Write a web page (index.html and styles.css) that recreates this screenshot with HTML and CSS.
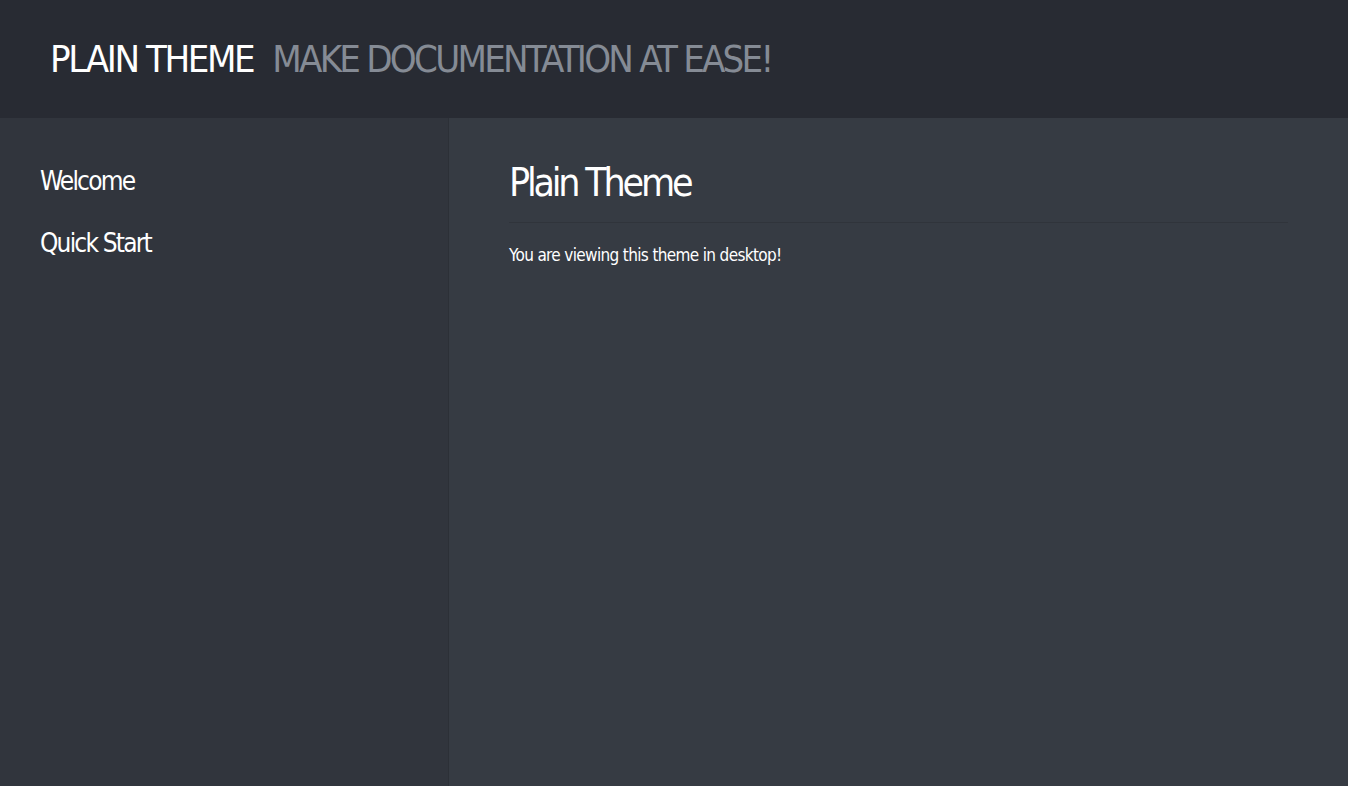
FILE: index.html
```html
<!DOCTYPE html>
<html>
<head>
<meta charset="utf-8">
<link rel="stylesheet" href="styles.css">
</head>
<body>
<header class="topbar">
  <span class="brand">PLAIN THEME</span>
  <span class="tagline">MAKE DOCUMENTATION AT EASE!</span>
</header>
<div class="layout">
  <nav class="sidebar">
    <a class="navlink" href="#">Welcome</a>
    <a class="navlink" href="#">Quick Start</a>
  </nav>
  <main class="content">
    <h1 class="title">Plain Theme</h1>
    <p class="text">You are viewing this theme in desktop!</p>
  </main>
</div>
</body>
</html>
```
FILE: styles.css
```css
html, body {
  margin: 0;
  padding: 0;
  height: 100%;
}
body {
  font-family: "Liberation Sans Narrow", "DejaVu Sans Condensed", "Liberation Sans", sans-serif;
  background: #363b43;
  color: #ffffff;
  display: flex;
  flex-direction: column;
  overflow: hidden;
}
.topbar {
  height: 118px;
  flex: none;
  background: #282b33;
  display: flex;
  align-items: center;
  padding-left: 50px;
  gap: 19px;
  font-size: 38px;
}
.brand {
  color: #ffffff;
  letter-spacing: -2.4px;
}
.tagline {
  color: #858b95;
  letter-spacing: -2.75px;
}
.layout {
  flex: 1;
  display: flex;
}
.sidebar {
  width: 449px;
  flex: none;
  background: #31353d;
  border-right: 1px solid #2c3037;
  padding: 43px 0 0 40px;
  box-sizing: border-box;
  display: flex;
  flex-direction: column;
  gap: 22px;
}
.navlink {
  color: #ffffff;
  text-decoration: none;
  font-size: 26px;
  line-height: 40px;
  letter-spacing: -1.8px;
}
.content {
  flex: 1;
  padding: 40px 60px 0 60px;
}
.title {
  margin: 0;
  font-weight: normal;
  font-size: 39px;
  line-height: 50px;
  padding-bottom: 14px;
  border-bottom: 1px solid #30343b;
  letter-spacing: -3.2px;
}
.text {
  margin: 22px 0 0;
  font-size: 17px;
  letter-spacing: -0.65px;
}
```
